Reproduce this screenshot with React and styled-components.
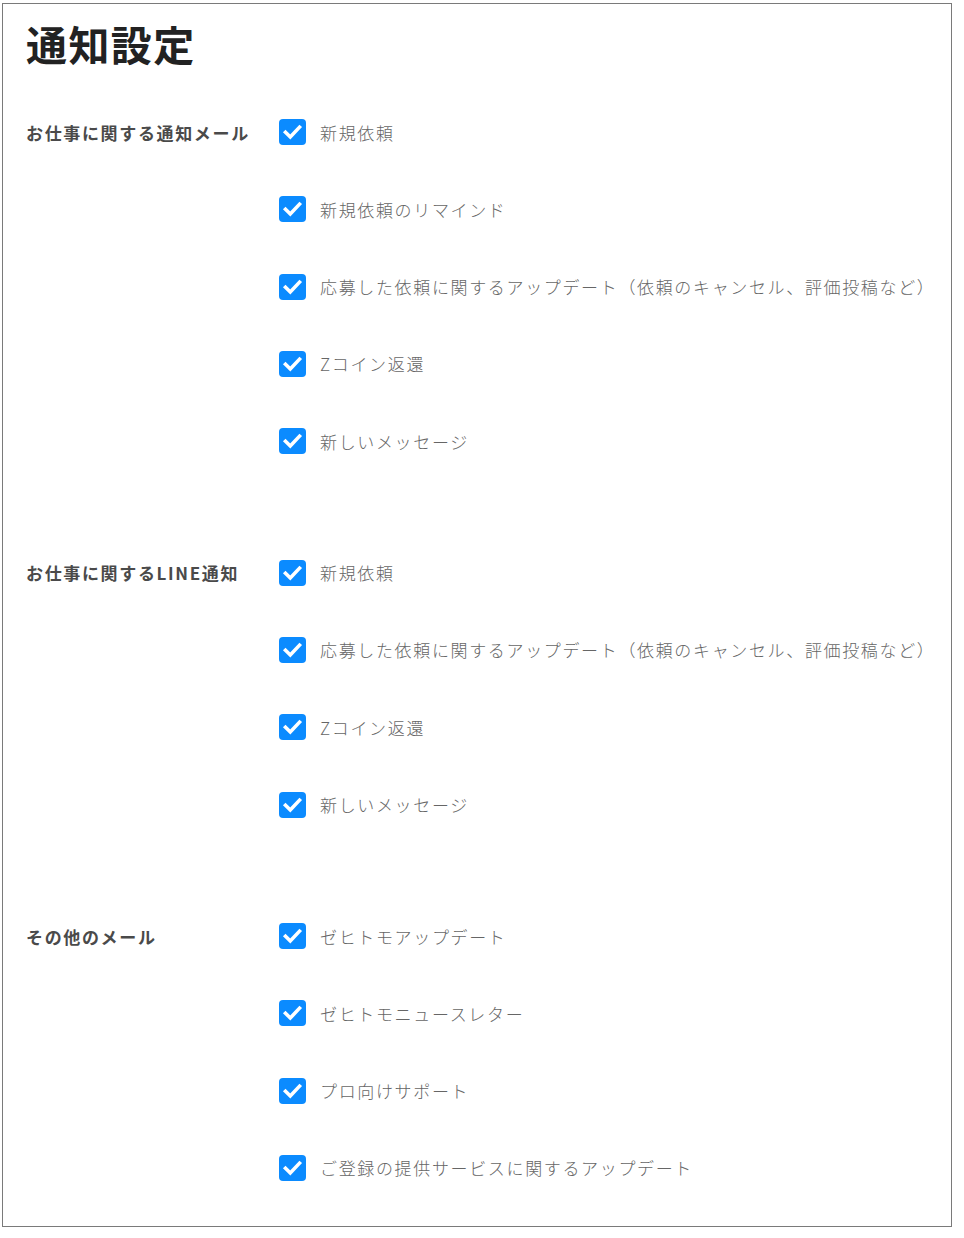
import React from 'react'
import styled, { createGlobalStyle } from 'styled-components'

const GlobalStyle = createGlobalStyle`
    body {
        margin: 0;
        background: #fff;
        font-family: "Noto Sans CJK JP", "Noto Sans", sans-serif;
    }
`

const Card = styled.div`
    box-sizing: border-box;
    width: 950px;
    height: 1224px;
    margin: 3px 0 0 2px;
    border: 1px solid #7a7a7a;
    padding: 0 23px;
`

const Title = styled.h1`
    margin: 0;
    padding-top: 11px;
    font-size: 41px;
    line-height: 56px;
    font-weight: 700;
    color: #222;
    letter-spacing: 1.4px;
`

const Sections = styled.div`
    display: flex;
    flex-direction: column;
    gap: 105.5px;
    margin-top: 48px;
`

const Section = styled.section`
    display: grid;
    grid-template-columns: 253px 1fr;
    align-items: start;
`

const Label = styled.div`
    height: 26px;
    display: flex;
    align-items: center;
    font-size: 17px;
    font-weight: 700;
    color: #4a4a4a;
    letter-spacing: 1.65px;
    white-space: nowrap;
`

const List = styled.ul`
    list-style: none;
    margin: 0;
    padding: 0;
    display: flex;
    flex-direction: column;
    gap: 51.3px;
`

const Item = styled.li`
    display: flex;
    align-items: center;
    gap: 14px;
    height: 26px;
    font-size: 17px;
    font-weight: 300;
    color: #666;
    letter-spacing: 1.65px;
    white-space: nowrap;
`

const Box = styled.svg`
    flex: none;
    display: block;
`

const CheckBox = () => (
    <Box width="27" height="26" viewBox="0 0 27 26">
        <rect x="0" y="0" width="27" height="26" rx="4" fill="#0b8bff" />
        <path d="M6.5 13.2 L11.3 18 L20.5 8.2" fill="none" stroke="#fff" strokeWidth="3.6" strokeLinecap="square" />
    </Box>
)

const sections = [
    {
        label: 'お仕事に関する通知メール',
        items: [
            '新規依頼',
            '新規依頼のリマインド',
            '応募した依頼に関するアップデート（依頼のキャンセル、評価投稿など）',
            'Zコイン返還',
            '新しいメッセージ',
        ],
    },
    {
        label: 'お仕事に関するLINE通知',
        items: [
            '新規依頼',
            '応募した依頼に関するアップデート（依頼のキャンセル、評価投稿など）',
            'Zコイン返還',
            '新しいメッセージ',
        ],
    },
    {
        label: 'その他のメール',
        items: [
            'ゼヒトモアップデート',
            'ゼヒトモニュースレター',
            'プロ向けサポート',
            'ご登録の提供サービスに関するアップデート',
        ],
    },
]

export default function App() {
    return (
        <>
            <GlobalStyle />
            <Card>
                <Title>通知設定</Title>
                <Sections>
                    {sections.map((s) => (
                        <Section key={s.label}>
                            <Label>{s.label}</Label>
                            <List>
                                {s.items.map((text) => (
                                    <Item key={text}>
                                        <CheckBox />
                                        <span>{text}</span>
                                    </Item>
                                ))}
                            </List>
                        </Section>
                    ))}
                </Sections>
            </Card>
        </>
    )
}
